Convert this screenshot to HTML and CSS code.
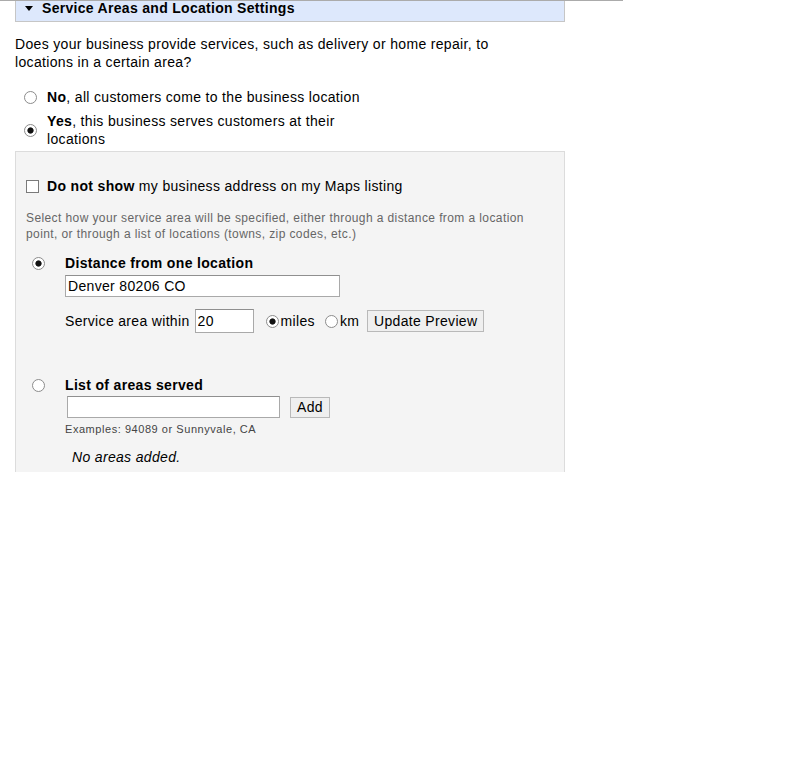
FILE: index.html
```html
<!DOCTYPE html>
<html>
<head>
<meta charset="utf-8">
<title>Service Areas and Location Settings</title>
<link rel="stylesheet" href="styles.css">
</head>
<body>
<div class="page">
  <div class="section-header">
    <span class="triangle"></span>
    <span class="section-title">Service Areas and Location Settings</span>
  </div>
  <div class="content">
    <p class="question">Does your business provide services, such as delivery or home repair, to locations in a certain area?</p>
    <div class="options">
      <label class="option">
        <input type="radio" name="serves" class="radio">
        <span class="option-text"><b>No</b>, all customers come to the business location</span>
      </label>
      <label class="option option-yes">
        <input type="radio" name="serves" class="radio" checked>
        <span class="option-text narrow"><b>Yes</b>, this business serves customers at their locations</span>
      </label>
    </div>
    <div class="service-box">
      <label class="check-row">
        <input type="checkbox" class="checkbox">
        <span><b>Do not show</b> my business address on my Maps listing</span>
      </label>
      <p class="help">Select how your service area will be specified, either through a distance from a location point, or through a list of locations (towns, zip codes, etc.)</p>

      <div class="choice">
        <div class="choice-radio"><input type="radio" name="mode" class="radio" checked></div>
        <div class="choice-body">
          <div class="choice-label">Distance from one location</div>
          <input type="text" class="text-input location-input" value="Denver 80206 CO">
          <div class="within-row">
            <span>Service area within</span>
            <input type="text" class="text-input distance-input" value="20">
            <label class="unit unit-miles"><input type="radio" name="unit" class="radio" checked><span>miles</span></label>
            <label class="unit unit-km"><input type="radio" name="unit" class="radio"><span>km</span></label>
            <button class="btn preview-btn" type="button">Update Preview</button>
          </div>
        </div>
      </div>

      <div class="choice choice-list">
        <div class="choice-radio"><input type="radio" name="mode" class="radio"></div>
        <div class="choice-body">
          <div class="choice-label">List of areas served</div>
          <div class="add-row">
            <input type="text" class="text-input area-input" value="">
            <button class="btn add-btn" type="button">Add</button>
          </div>
          <div class="examples">Examples: 94089 or Sunnyvale, CA</div>
          <div class="no-areas">No areas added.</div>
        </div>
      </div>
    </div>
  </div>
</div>
</body>
</html>
```
FILE: styles.css
```css
html, body {
  margin: 0;
  padding: 0;
  background: #fff;
}
body {
  font-family: "Liberation Sans", Arial, sans-serif;
  font-size: 14px;
  letter-spacing: 0.33px;
  color: #000;
}
.page {
  width: 623px;
  border-top: 1px solid #ababab;
}
.section-header {
  margin-left: 15px;
  width: 539px;
  padding: 0 0 5px 9px;
  background: #dde8fc;
  border: 1px solid #c6c6c6;
  border-top: none;
  display: flex;
  align-items: center;
  gap: 9px;
}
.triangle {
  width: 0;
  height: 0;
  border-left: 4px solid transparent;
  border-right: 4px solid transparent;
  border-top: 5px solid #000;
}
.section-title {
  font-weight: bold;
  font-size: 14px;
  line-height: 15px;
  letter-spacing: 0.3px;
}
.content {
  margin-left: 15px;
  width: 550px;
}
.question {
  margin: 13px 0 0;
  width: 500px;
  line-height: 18px;
}
.options {
  margin-top: 17px;
  padding-left: 9px;
}
.option {
  display: flex;
  align-items: center;
  gap: 10px;
  line-height: 18px;
}
.option-yes {
  margin-top: 6px;
}
.narrow {
  max-width: 305px;
}
.radio {
  appearance: none;
  -webkit-appearance: none;
  width: 13px;
  height: 13px;
  margin: 0;
  border: 1px solid #8c8c8c;
  border-radius: 50%;
  background: #fff;
  flex: none;
  box-sizing: border-box;
}
.radio:checked {
  background: radial-gradient(circle, #111 0, #111 2.7px, #fff 3.5px);
}
.service-box {
  margin-top: 3px;
  background: #f4f4f4;
  border: 1px solid #dcdcdc;
  border-bottom: none;
  padding: 25px 10px 6px 10px;
}
.check-row {
  display: flex;
  align-items: center;
  gap: 8px;
  line-height: 18px;
}
.checkbox {
  appearance: none;
  -webkit-appearance: none;
  width: 13px;
  height: 13px;
  margin: 0;
  border: 1px solid #7a7a7a;
  background: #fff;
  box-sizing: border-box;
  flex: none;
}
.help {
  margin: 15px 0 0;
  max-width: 515px;
  font-size: 12px;
  line-height: 16px;
  letter-spacing: 0.4px;
  color: #666;
}
.choice {
  margin-top: 12px;
  display: grid;
  grid-template-columns: 39px 1fr;
}
.choice-list {
  margin-top: 43px;
}
.choice-radio {
  padding-left: 6px;
  height: 18px;
  display: flex;
  align-items: center;
}
.choice-label {
  font-weight: bold;
  line-height: 18px;
}
.text-input {
  font-family: "Liberation Sans", Arial, sans-serif;
  font-size: 14px;
  letter-spacing: 0.33px;
  color: #000;
  border: 1px solid #a9a9a9;
  border-top-color: #8f8f8f;
  background: #fff;
  padding: 0 2px;
  margin: 0;
  box-sizing: border-box;
  outline: none;
}
.location-input {
  display: block;
  margin-top: 3px;
  width: 275px;
  height: 22px;
}
.within-row {
  margin-top: 12px;
  display: flex;
  align-items: center;
  height: 24px;
}
.distance-input {
  margin-left: 5px;
  width: 59px;
  height: 24px;
}
.unit {
  display: flex;
  align-items: center;
  gap: 2px;
}
.unit-miles {
  margin-left: 12px;
}
.unit-km {
  margin-left: 10px;
}
.btn {
  font-family: "Liberation Sans", Arial, sans-serif;
  font-size: 14px;
  letter-spacing: 0.33px;
  color: #000;
  background: #efefef;
  border: 1px solid #b9b9b9;
  border-radius: 0;
  padding: 0 4px;
  height: 22px;
  margin: 0;
  box-sizing: border-box;
}
.preview-btn {
  margin-left: 8px;
  width: 117px;
}
.add-row {
  margin-top: 2px;
  display: flex;
  align-items: center;
  padding-left: 2px;
}
.area-input {
  width: 213px;
  height: 22px;
}
.add-btn {
  margin-left: 10px;
  width: 40px;
  height: 21px;
  padding: 0;
}
.examples {
  margin-top: 3px;
  font-size: 11px;
  line-height: 16px;
  letter-spacing: 0.55px;
  color: #444;
}
.no-areas {
  margin-top: 11px;
  padding-left: 7px;
  font-style: italic;
  line-height: 18px;
}
```
